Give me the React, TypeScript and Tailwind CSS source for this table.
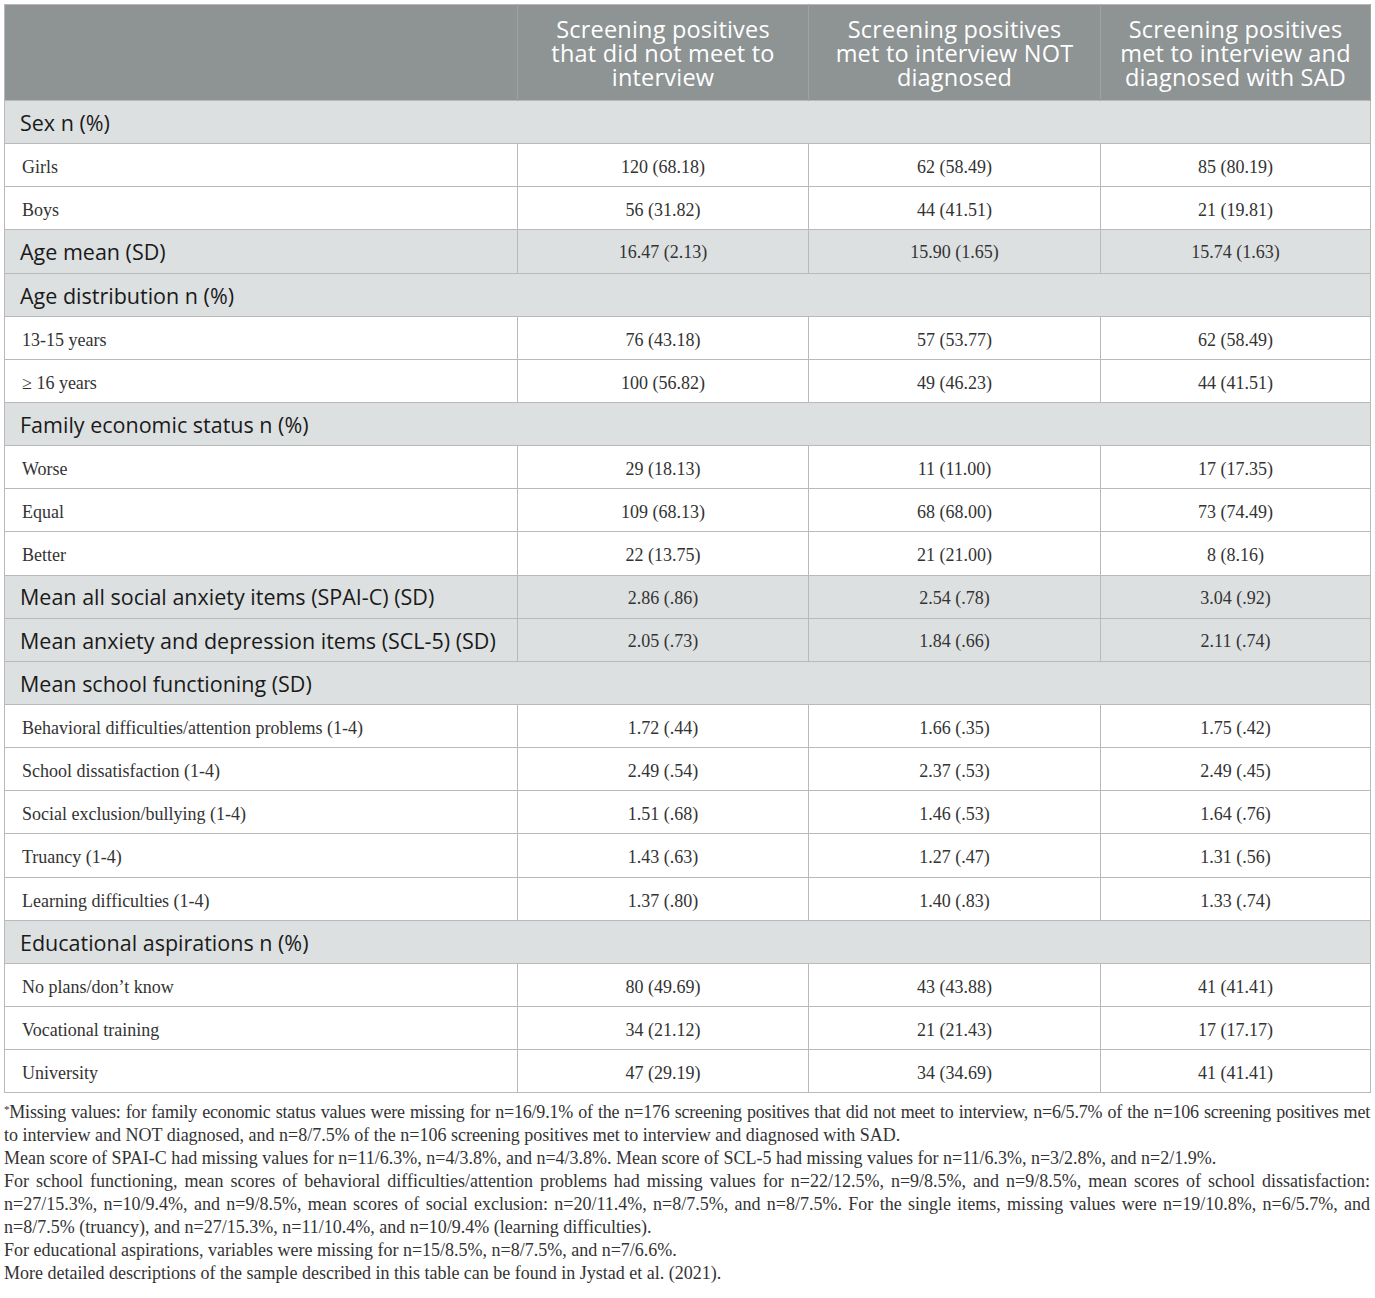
import React from "react";

type Row =
  | { kind: "section"; label: string; values?: string[] }
  | { kind: "data"; label: string; values: string[] };

const rows: Row[] = [
  { kind: "section", label: "Sex n (%)" },
  { kind: "data", label: "Girls", values: ["120 (68.18)", "62 (58.49)", "85 (80.19)"] },
  { kind: "data", label: "Boys", values: ["56 (31.82)", "44 (41.51)", "21 (19.81)"] },
  { kind: "section", label: "Age mean (SD)", values: ["16.47 (2.13)", "15.90 (1.65)", "15.74 (1.63)"] },
  { kind: "section", label: "Age distribution n (%)" },
  { kind: "data", label: "13-15 years", values: ["76 (43.18)", "57 (53.77)", "62 (58.49)"] },
  { kind: "data", label: "≥ 16 years", values: ["100 (56.82)", "49 (46.23)", "44 (41.51)"] },
  { kind: "section", label: "Family economic status n (%)" },
  { kind: "data", label: "Worse", values: ["29 (18.13)", "11 (11.00)", "17 (17.35)"] },
  { kind: "data", label: "Equal", values: ["109 (68.13)", "68 (68.00)", "73 (74.49)"] },
  { kind: "data", label: "Better", values: ["22 (13.75)", "21 (21.00)", "8 (8.16)"] },
  { kind: "section", label: "Mean all social anxiety items (SPAI-C) (SD)", values: ["2.86 (.86)", "2.54 (.78)", "3.04 (.92)"] },
  { kind: "section", label: "Mean anxiety and depression items (SCL-5) (SD)", values: ["2.05 (.73)", "1.84 (.66)", "2.11 (.74)"] },
  { kind: "section", label: "Mean school functioning (SD)" },
  { kind: "data", label: "Behavioral difficulties/attention problems (1-4)", values: ["1.72 (.44)", "1.66 (.35)", "1.75 (.42)"] },
  { kind: "data", label: "School dissatisfaction (1-4)", values: ["2.49 (.54)", "2.37 (.53)", "2.49 (.45)"] },
  { kind: "data", label: "Social exclusion/bullying (1-4)", values: ["1.51 (.68)", "1.46 (.53)", "1.64 (.76)"] },
  { kind: "data", label: "Truancy (1-4)", values: ["1.43 (.63)", "1.27 (.47)", "1.31 (.56)"] },
  { kind: "data", label: "Learning difficulties (1-4)", values: ["1.37 (.80)", "1.40 (.83)", "1.33 (.74)"] },
  { kind: "section", label: "Educational aspirations n (%)" },
  { kind: "data", label: "No plans/don’t know", values: ["80 (49.69)", "43 (43.88)", "41 (41.41)"] },
  { kind: "data", label: "Vocational training", values: ["34 (21.12)", "21 (21.43)", "17 (17.17)"] },
  { kind: "data", label: "University", values: ["47 (29.19)", "34 (34.69)", "41 (41.41)"] },
];

const headers = [
  ["Screening positives", "that did not meet to", "interview"],
  ["Screening positives", "met to interview NOT", "diagnosed"],
  ["Screening positives", "met to interview and", "diagnosed with SAD"],
];

// footnote lines: [text, stretched to full width, tighter spacing]
const notes: [string, boolean, boolean][] = [
  ["Missing values: for family economic status values were missing for n=16/9.1% of the n=176 screening positives that did not meet to interview, n=6/5.7% of the n=106 screening positives met", true, true],
  ["to interview and NOT diagnosed, and n=8/7.5% of the n=106 screening positives met to interview and diagnosed with SAD.", false, false],
  ["Mean score of SPAI-C had missing values for n=11/6.3%, n=4/3.8%, and n=4/3.8%. Mean score of SCL-5 had missing values for n=11/6.3%, n=3/2.8%, and n=2/1.9%.", false, false],
  ["For school functioning, mean scores of behavioral difficulties/attention problems had missing values for n=22/12.5%, n=9/8.5%, and n=9/8.5%, mean scores of school dissatisfaction:", true, false],
  ["n=27/15.3%, n=10/9.4%, and n=9/8.5%, mean scores of social exclusion: n=20/11.4%, n=8/7.5%, and n=8/7.5%. For the single items, missing values were n=19/10.8%, n=6/5.7%, and", true, false],
  ["n=8/7.5% (truancy), and n=27/15.3%, n=11/10.4%, and n=10/9.4% (learning difficulties).", false, false],
  ["For educational aspirations, variables were missing for n=15/8.5%, n=8/7.5%, and n=7/6.6%.", false, false],
  ["More detailed descriptions of the sample described in this table can be found in Jystad et al. (2021).", false, false],
];

const sans = "font-['Open_Sans',sans-serif]";
const serif = "font-['Liberation_Serif',serif]";
const cell = "border border-[#b9b9b9]";

export default function App() {
  return (
    <div className="w-[1375px] bg-white p-[4px] text-[#222]">
      <table className="w-[1366px] table-fixed border-collapse border border-[#b9b9b9]">
        <colgroup>
          <col className="w-[513px]" />
          <col className="w-[291px]" />
          <col className="w-[292px]" />
          <col className="w-[270px]" />
        </colgroup>
        <thead>
          <tr className="bg-[#8e9394]">
            <th className="h-[96px] border-r border-[#9ea2a3]" />
            {headers.map((h, i) => (
              <th
                key={i}
                className={`${sans} border-r border-[#9ea2a3] px-1 text-center text-[23.5px] font-normal leading-[24px] tracking-[0.2px] text-white`}
              >
                {h.map((line) => (
                  <div key={line} className="whitespace-nowrap">{line}</div>
                ))}
              </th>
            ))}
          </tr>
        </thead>
        <tbody>
          {rows.map((row) =>
            row.kind === "section" ? (
              <tr key={row.label} className="bg-[#dde0e1]">
                {row.values ? (
                  <>
                    <td className={`${sans} ${cell} h-[43.15px] pl-[15px] pt-[2px] text-[21.5px] text-[#1a1a1a]`}>
                      {row.label}
                    </td>
                    {row.values.map((v, i) => (
                      <td key={i} className={`${serif} ${cell} pt-[3px] text-center text-[18px] text-[#333]`}>
                        {v}
                      </td>
                    ))}
                  </>
                ) : (
                  <td colSpan={4} className={`${sans} ${cell} h-[43.15px] pl-[15px] pt-[2px] text-[21.5px] text-[#1a1a1a]`}>
                    {row.label}
                  </td>
                )}
              </tr>
            ) : (
              <tr key={row.label} className="bg-white">
                <td className={`${serif} ${cell} h-[43.15px] pl-[17px] pt-[5px] text-[18px] text-[#333]`}>
                  {row.label}
                </td>
                {row.values.map((v, i) => (
                  <td key={i} className={`${serif} ${cell} pt-[5px] text-center text-[18px] text-[#333]`}>
                    {v}
                  </td>
                ))}
              </tr>
            )
          )}
        </tbody>
      </table>

      <div className={`${serif} mt-[8px] w-[1366px] text-[18px] leading-[23px] text-[#333]`}>
        {notes.map(([text, full, tight], i) => (
          <div
            key={i}
            className={`whitespace-nowrap ${full ? "text-justify [text-align-last:justify]" : ""} ${tight ? "tracking-[-0.2px] [word-spacing:-1px]" : ""}`}
          >
            {i === 0 && <sup className="text-[11px]">*</sup>}
            {text}
          </div>
        ))}
      </div>
    </div>
  );
}
